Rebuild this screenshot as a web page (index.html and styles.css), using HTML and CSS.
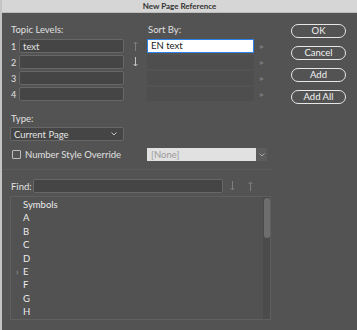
FILE: index.html
```html
<!DOCTYPE html>
<html lang="en">
<head>
  <meta charset="UTF-8">
  <title>New Page Reference</title>
  <link rel="stylesheet" href="styles.css">
</head>
<body>
  <div class="window">
    <div class="titlebar">New Page Reference</div>
    <div class="content">
      <div class="top">
        <div class="levels">
          <div class="label lbl-topic">Topic Levels:</div>
          <div class="label lbl-sort">Sort By:</div>

          <div class="num">1</div>
          <div class="field">text</div>
          <div class="arrow dim">
            <svg width="5" height="10" viewBox="0 0 5 10"><path d="M2.5 1v9M0.5 3L2.5 1l2 2" fill="none" stroke="currentColor" stroke-width="1"/></svg>
          </div>
          <div class="sort active">EN text</div>
          <div class="tri">&#9656;</div>

          <div class="num">2</div>
          <div class="field"></div>
          <div class="arrow bright">
            <svg width="5" height="10" viewBox="0 0 5 10"><path d="M2.5 0v9M0.5 7L2.5 9l2-2" fill="none" stroke="currentColor" stroke-width="1"/></svg>
          </div>
          <div class="sort"></div>
          <div class="tri">&#9656;</div>

          <div class="num">3</div>
          <div class="field"></div>
          <div class="arrow"></div>
          <div class="sort"></div>
          <div class="tri">&#9656;</div>

          <div class="num">4</div>
          <div class="field"></div>
          <div class="arrow"></div>
          <div class="sort"></div>
          <div class="tri">&#9656;</div>
        </div>

        <div class="buttons">
          <div class="btn">OK</div>
          <div class="btn">Cancel</div>
          <div class="btn">Add</div>
          <div class="btn">Add All</div>
        </div>
      </div>

      <div class="label type-label">Type:</div>
      <div class="select">
        <span>Current Page</span>
        <svg width="6" height="4" viewBox="0 0 6 4"><path d="M0.5 0.5L3 3l2.5-2.5" fill="none" stroke="currentColor" stroke-width="1"/></svg>
      </div>

      <div class="override">
        <div class="check-wrap">
          <span class="checkbox"></span>
          <span class="label">Number Style Override</span>
        </div>
        <div class="style-select">
          <span class="style-value">[None]</span>
          <span class="style-btn">
            <svg width="6" height="4" viewBox="0 0 6 4"><path d="M0.5 0.5L3 3l2.5-2.5" fill="none" stroke="currentColor" stroke-width="1"/></svg>
          </span>
        </div>
      </div>

      <div class="separator"></div>

      <div class="find-row">
        <span class="label">Find:</span>
        <div class="find-field"></div>
        <span class="find-arrow">
          <svg width="5" height="10" viewBox="0 0 5 10"><path d="M2.5 0v9M0.5 7L2.5 9l2-2" fill="none" stroke="currentColor" stroke-width="1"/></svg>
        </span>
        <span class="find-arrow">
          <svg width="5" height="10" viewBox="0 0 5 10"><path d="M2.5 1v9M0.5 3L2.5 1l2 2" fill="none" stroke="currentColor" stroke-width="1"/></svg>
        </span>
      </div>

      <div class="list">
        <ul class="items">
          <li>Symbols</li>
          <li>A</li>
          <li>B</li>
          <li>C</li>
          <li>D</li>
          <li class="has-children">E</li>
          <li>F</li>
          <li>G</li>
          <li>H</li>
        </ul>
        <div class="scrollbar"><div class="thumb"></div></div>
      </div>
    </div>
  </div>
</body>
</html>
```

FILE: styles.css
```css
body {
  margin: 0;
  background: #4a4a4a;
  font-family: Lato, "Noto Sans", sans-serif;
  font-size: 9.5px;
  color: #e2e2e2;
}
.window {
  width: 355px;
  height: 330px;
  border-left: 2px solid #c4c4c4;
  background: #535353;
  overflow: hidden;
}
.titlebar {
  height: 13px;
  line-height: 13px;
  background: #d6d6d6;
  border-bottom: 1px solid #bdbdbd;
  box-sizing: border-box;
  text-align: center;
  color: #333;
  font-weight: bold;
  font-size: 8px;
}
.content {
  padding: 0 0 0 8px;
}
.label {
  color: #e0e0e0;
}
.top {
  display: flex;
}
.levels {
  display: grid;
  grid-template-columns: 9px 105px 23px 107px 16px;
  grid-auto-rows: 14px;
  row-gap: 2px;
  padding-top: 10px;
  align-items: center;
}
.lbl-topic {
  grid-column: 1 / 3;
  height: 13px;
  line-height: 13px;
  margin-left: 1px;
}
.lbl-sort {
  grid-column: 4 / 6;
  height: 13px;
  line-height: 13px;
  margin-left: 1px;
}
.levels .lbl-topic, .levels .lbl-sort {
  align-self: start;
}
.num {
  padding-left: 1px;
  font-size: 9px;
}
.field {
  height: 14px;
  line-height: 13px;
  box-sizing: border-box;
  background: #454545;
  border: 1px solid #676767;
  border-radius: 2px;
  padding-left: 3px;
}
.arrow {
  display: flex;
  justify-content: center;
  color: #7d7d7d;
}
.arrow.bright {
  color: #c4c4c4;
}
.sort {
  height: 14px;
  background: #4e4e4e;
  box-sizing: border-box;
}
.sort.active {
  background: #fff;
  border: 1px solid #2d81e8;
  color: #222;
  line-height: 12px;
  padding-left: 3px;
}
.tri {
  color: #7a7a7a;
  font-size: 8px;
  text-align: center;
}
.buttons {
  display: flex;
  flex-direction: column;
  gap: 8px;
  padding-top: 11px;
  margin-left: 21px;
}
.btn {
  width: 55px;
  height: 14px;
  line-height: 12px;
  box-sizing: border-box;
  border: 1px solid #e6e6e6;
  border-radius: 8px;
  text-align: center;
  color: #f2f2f2;
}
.type-label {
  margin-top: 8px;
  margin-left: 1px;
  height: 13px;
  line-height: 13px;
}
.select {
  width: 114px;
  height: 14px;
  box-sizing: border-box;
  margin-top: 2px;
  background: #454545;
  border: 1px solid #676767;
  border-radius: 2px;
  display: flex;
  align-items: center;
  justify-content: space-between;
  padding: 0 6px 0 3px;
  color: #e4e4e4;
}
.select svg {
  color: #c8c8c8;
}
.override {
  display: flex;
  align-items: center;
  margin-top: 7px;
  height: 13px;
}
.check-wrap {
  display: flex;
  align-items: center;
  width: 137px;
  padding-left: 2px;
  box-sizing: border-box;
}
.checkbox {
  width: 9px;
  height: 9px;
  box-sizing: border-box;
  border: 1px solid #bdbdbd;
  border-radius: 1px;
  margin-right: 4px;
}
.style-select {
  display: flex;
  height: 13px;
}
.style-value {
  width: 109px;
  background: #e1e1e1;
  color: #9a9a9a;
  line-height: 13px;
  padding-left: 4px;
  box-sizing: border-box;
}
.style-btn {
  width: 11px;
  background: #5c5c5c;
  display: flex;
  align-items: center;
  justify-content: center;
  color: #a8a8a8;
}
.separator {
  height: 1px;
  background: #5b5b5b;
  margin: 8px 0 0 -8px;
  width: 270px;
}
.find-row {
  display: flex;
  align-items: center;
  margin-top: 9px;
  height: 14px;
}
.find-row .label {
  width: 22px;
  padding-left: 1px;
}
.find-field {
  width: 190px;
  height: 14px;
  box-sizing: border-box;
  background: #454545;
  border: 1px solid #676767;
  border-radius: 2px;
}
.find-arrow {
  display: flex;
  color: #7d7d7d;
  width: 18px;
  justify-content: center;
}
.find-arrow:first-of-type {
  margin-left: 1px;
}
.list {
  display: flex;
  width: 261px;
  height: 124px;
  box-sizing: border-box;
  margin-top: 3px;
  border: 1px solid #5f5f5f;
  background: #525252;
}
.items {
  list-style: none;
  margin: 0;
  padding: 1px 0 0 12px;
  flex: 1;
}
.items li {
  height: 13.4px;
  line-height: 13.4px;
  color: #ececec;
  position: relative;
}
.items li.has-children::before {
  content: "\203A";
  position: absolute;
  left: -7px;
  color: #a0a0a0;
  font-size: 9px;
}
.scrollbar {
  width: 7px;
  background: #4b4b4b;
  padding: 1px 0;
}
.thumb {
  height: 40px;
  width: 6px;
  margin-left: 0.5px;
  background: #6e6e6e;
  border-radius: 3px;
}
```
